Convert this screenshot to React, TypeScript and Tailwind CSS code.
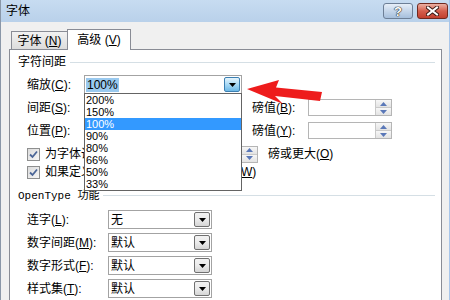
import React from "react";

const Acc = ({ k }: { k: string }) => (
  <>
    (<span className="underline">{k}</span>)
  </>
);

function Tri({ color = "#000" }: { color?: string }) {
  return (
    <svg width="7" height="4" viewBox="0 0 7 4">
      <path d="M0 0 H7 L3.5 4 Z" fill={color} />
    </svg>
  );
}

function Combo({
  w,
  value,
  blue,
  selected,
  children,
}: {
  w: string;
  value?: string;
  blue?: boolean;
  selected?: boolean;
  children?: React.ReactNode;
}) {
  return (
    <div className={`relative ${w} h-[19px] bg-white border border-[#a3a3a3] flex items-center`}>
      <div className="flex-1 pl-[1px] text-[12px] leading-[14px]">
        {value && <span className={selected ? "bg-[#99c9ef] px-[1px]" : "px-[1px]"}>{value}</span>}
      </div>
      {blue ? (
        <div className="mr-[1px] w-[16px] h-[15px] border border-[#3c7fb1] rounded-[2px] bg-gradient-to-b from-[#e5f4fc] via-[#a7d9f5] to-[#6cb8e6] flex items-center justify-center">
          <Tri />
        </div>
      ) : (
        <div className="mr-[1px] w-[16px] h-[15px] border border-[#707070] rounded-[2px] bg-gradient-to-b from-[#f2f2f2] via-[#ebebeb] to-[#d5d5d5] flex items-center justify-center">
          <Tri />
        </div>
      )}
      {children}
    </div>
  );
}

function Spin({ w }: { w: string }) {
  return (
    <div className={`${w} h-[17px] bg-white border border-[#b5b5b5] flex justify-end`}>
      <div className="w-[16px] h-full flex flex-col border-l border-[#c9c9c9]">
        <div className="flex-1 flex items-center justify-center bg-gradient-to-b from-[#f7f7f7] to-[#e3e3e3] border-b border-[#c9c9c9]">
          <svg width="7" height="4" viewBox="0 0 7 4">
            <path d="M0 4 H7 L3.5 0 Z" fill="#5a78b8" />
          </svg>
        </div>
        <div className="flex-1 flex items-center justify-center bg-gradient-to-b from-[#f7f7f7] to-[#e3e3e3]">
          <Tri color="#5a78b8" />
        </div>
      </div>
    </div>
  );
}

function Check() {
  return (
    <div className="w-[13px] h-[13px] border border-[#8e8f8f] bg-gradient-to-br from-[#dcdcdc] to-[#f6f6f6] flex items-center justify-center">
      <svg width="9" height="9" viewBox="0 0 9 9">
        <path d="M1 4.5 L3.5 7 L8 1.5" stroke="#4a6597" strokeWidth="1.8" fill="none" />
      </svg>
    </div>
  );
}

const Label = ({ children, w }: { children: React.ReactNode; w: string }) => (
  <span className={`${w} shrink-0 text-[12px] leading-[14px] whitespace-nowrap`}>{children}</span>
);

function Section({ title }: { title: React.ReactNode }) {
  return (
    <div className="h-[14px] flex items-center pl-[8px] pr-[6px] gap-[4px]">
      <span className="text-[12px] leading-[14px] whitespace-nowrap">{title}</span>
      <div className="flex-1 h-[1px] bg-[#d5dfe5]" />
    </div>
  );
}

const zoomItems = ["200%", "150%", "100%", "90%", "80%", "66%", "50%", "33%"];

export default function App() {
  return (
    <div className="relative w-[450px] h-[300px] overflow-hidden bg-[#f0f0f0] border-l border-l-[#8a97a8] border-r border-r-[#a8c6ea] text-black font-['Liberation_Sans','Noto_Sans_CJK_SC',sans-serif]">
      {/* title bar */}
      <div className="h-[22px] flex items-center justify-between pl-[5px] pr-[1px] bg-gradient-to-b from-[#c7dcf1] to-[#b9d1ea]">
        <span className="text-[12px] leading-[14px]">字体</span>
        <div className="flex gap-[4px]">
          <div className="w-[30px] h-[16px] rounded-[3px] border border-[#6d7f96] bg-gradient-to-b from-[#e6eef8] via-[#c5d6ea] to-[#a6bfdc] flex items-center justify-center">
            <span className="text-[13px] leading-[13px] font-bold text-white [text-shadow:0_0_1px_#222,0_0_1px_#222,0_0_1px_#222]">?</span>
          </div>
          <div className="w-[31px] h-[16px] rounded-[3px] border border-[#70291f] bg-gradient-to-b from-[#eab0a4] via-[#d45e4d] to-[#c2402f] flex items-center justify-center">
            <svg width="13" height="10" viewBox="0 0 13 10">
              <path d="M2 1.5 L11 8.5 M11 1.5 L2 8.5" stroke="#3a1a16" strokeWidth="4" strokeLinecap="square" />
              <path d="M2 1.5 L11 8.5 M11 1.5 L2 8.5" stroke="#ffffff" strokeWidth="2" strokeLinecap="square" />
            </svg>
          </div>
        </div>
      </div>

      {/* tabs */}
      <div className="pt-[7px] pl-[10px] flex items-end">
        <div className="w-[56px] h-[18px] border border-b-0 border-r-0 border-[#898c95] bg-gradient-to-b from-[#f2f2f2] to-[#dcdcdc] flex items-center justify-center text-[12px] leading-[14px]">
          字体 <Acc k="N" />
        </div>
        <div className="relative z-10 -mb-[1px] w-[64px] h-[21px] border border-b-0 border-[#898c95] bg-white flex items-center justify-center text-[12px] leading-[14px]">
          高级 <Acc k="V" />
        </div>
      </div>

      {/* panel */}
      <div className="ml-[8px] w-[433px] h-[260px] bg-white border border-[#898c95] pt-[5px]">
        <Section title="字符间距" />

        <div className="mt-[4px] pl-[17px] flex flex-col">
          <div className="h-[23px] flex items-center">
            <Label w="w-[57px]">
              缩放<Acc k="C" />:
            </Label>
            <Combo w="w-[158px]" value="100%" blue selected>
              <div className="absolute z-20 left-[-1px] top-[17px] w-[158px] bg-white border border-[#646464]">
                {zoomItems.map((it) => (
                  <div
                    key={it}
                    className={`h-[12px] pl-[1px] text-[11px] leading-[12px] ${
                      it === "100%" ? "bg-[#3399ff] text-white" : ""
                    }`}
                  >
                    {it}
                  </div>
                ))}
              </div>
            </Combo>
          </div>

          <div className="h-[23px] flex items-center">
            <Label w="w-[57px]">
              间距<Acc k="S" />:
            </Label>
            <Combo w="w-[158px]" />
            <Label w="ml-[10px] w-[56px]">
              磅值<Acc k="B" />:
            </Label>
            <Spin w="w-[84px]" />
          </div>

          <div className="h-[23px] flex items-center">
            <Label w="w-[57px]">
              位置<Acc k="P" />:
            </Label>
            <Combo w="w-[158px]" />
            <Label w="ml-[10px] w-[56px]">
              磅值<Acc k="Y" />:
            </Label>
            <Spin w="w-[84px]" />
          </div>

          <div className="mt-[3px] h-[18px] flex items-center">
            <div className="w-[163px] flex items-center gap-[5px]">
              <Check />
              <span className="text-[12px] leading-[14px] whitespace-nowrap">
                为字体调整字间距<Acc k="K" />:
              </span>
            </div>
            <Spin w="w-[68px]" />
            <span className="ml-[10px] text-[12px] leading-[14px] whitespace-nowrap">
              磅或更大<Acc k="O" />
            </span>
          </div>

          <div className="h-[18px] flex items-center gap-[5px]">
            <Check />
            <span className="text-[12px] leading-[14px] whitespace-nowrap">
              如果定义了文档网格，则对齐到网格<Acc k="W" />
            </span>
          </div>
        </div>

        <div className="mt-[7px]">
          <Section title={<span className="font-['Liberation_Mono','Noto_Sans_CJK_SC',monospace] text-[11px]">OpenType 功能</span>} />
        </div>

        <div className="mt-[6px] pl-[17px] flex flex-col">
          {[
            ["连字", "L", "无"],
            ["数字间距", "M", "默认"],
            ["数字形式", "F", "默认"],
            ["样式集", "T", "默认"],
          ].map(([name, k, v]) => (
            <div key={k} className="h-[23px] flex items-center">
              <Label w="w-[81px]">
                {name}
                <Acc k={k} />:
              </Label>
              <Combo w="w-[104px]" value={v} />
            </div>
          ))}
        </div>
      </div>

      {/* red arrow annotation */}
      <svg className="absolute left-0 top-0 pointer-events-none z-30" width="450" height="300">
        <path d="M246 89 L278 80 L275 87.5 L321 92 L319 101 L274 96 L282 104 Z" fill="#ee1c1c" />
      </svg>
    </div>
  );
}
